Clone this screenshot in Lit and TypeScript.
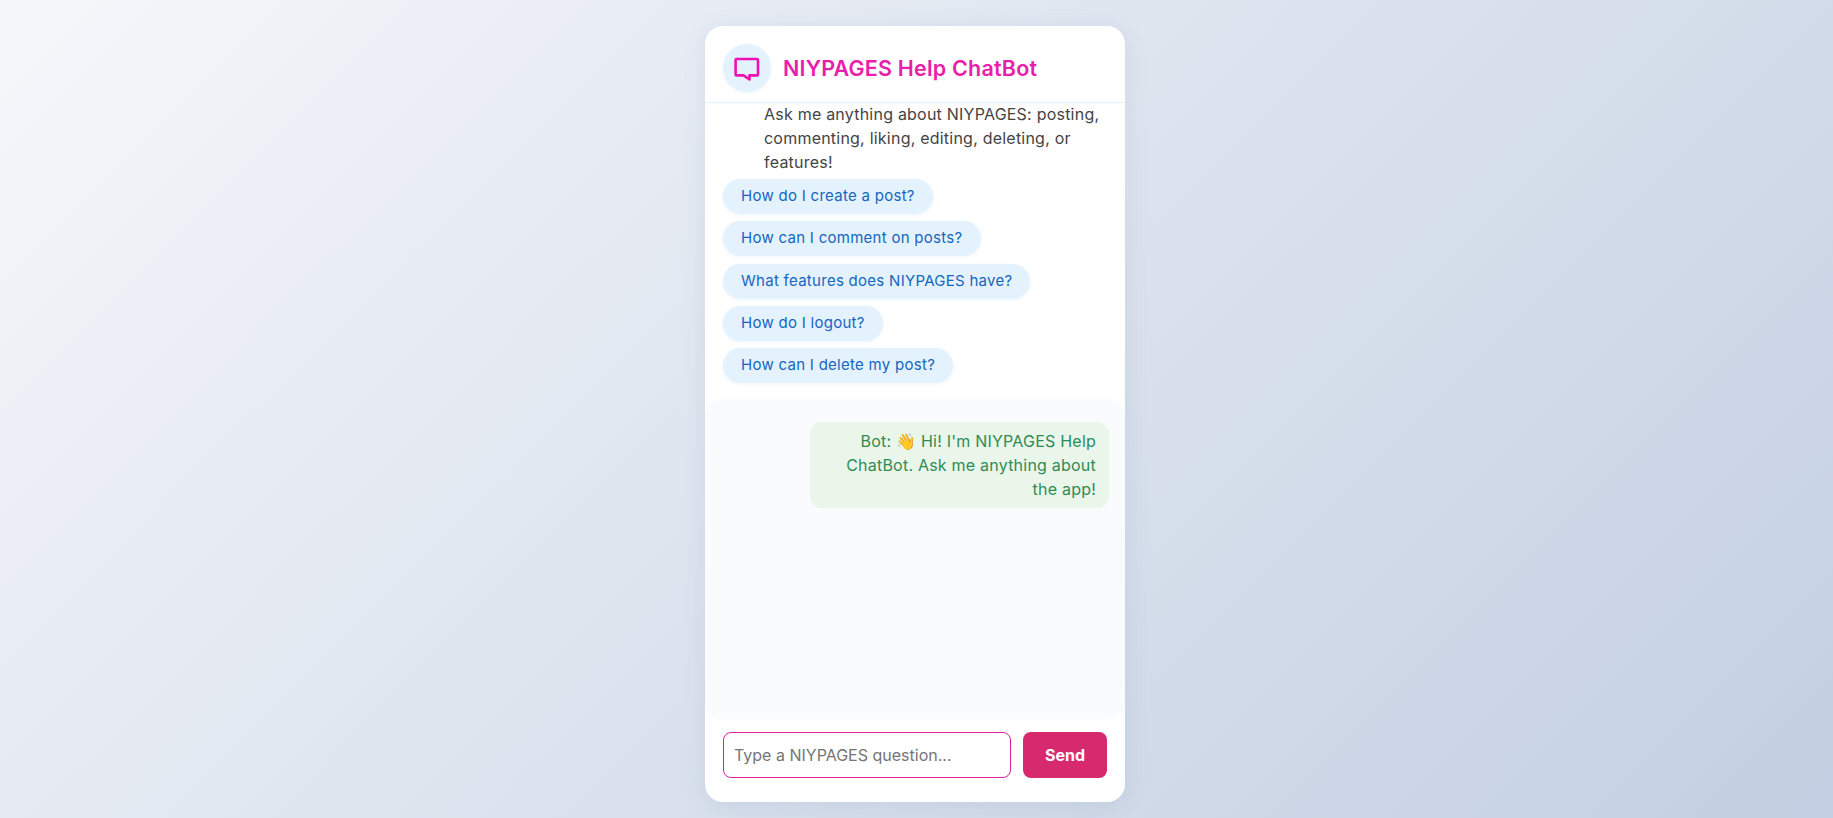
import { LitElement, css, html } from 'lit'
import { customElement, state } from 'lit/decorators.js'

const QUESTIONS = [
  'How do I create a post?',
  'How can I comment on posts?',
  'What features does NIYPAGES have?',
  'How do I logout?',
  'How can I delete my post?',
]

@customElement('app-root')
export class AppRoot extends LitElement {
  @state() private draft = ''

  static styles = css`
    :host {
      display: flex;
      justify-content: center;
      box-sizing: border-box;
      height: 818px;
      padding: 26px 3px 16px 0;
      background: linear-gradient(135deg, #f5f7fa 0%, #c3cfe2 100%);
      font-family: Inter, 'Open Sans', sans-serif;
      font-size: 16px;
      letter-spacing: 0.22px;
    }

    .card {
      width: 420px;
      display: flex;
      flex-direction: column;
      background: #fff;
      border-radius: 18px;
      box-shadow: 0 4px 24px rgba(60, 90, 150, 0.1);
      overflow: hidden;
    }

    .header {
      display: flex;
      align-items: center;
      gap: 12px;
      height: 77px;
      box-sizing: border-box;
      padding: 18px 18px 10px;
      border-bottom: 1px solid #e3f2fd;
    }
    .avatar {
      width: 48px;
      height: 48px;
      border-radius: 50%;
      background: #e3f2fd;
      display: flex;
      align-items: center;
      justify-content: center;
      box-shadow: 0 1px 4px rgba(25, 118, 210, 0.06);
    }
    .title {
      font-size: 21.5px;
      font-weight: 600;
      letter-spacing: 0.2px;
      color: #e91eaa;
    }

    .intro {
      margin: -1px 0 0;
      padding: 0 18px 0 59px;
      color: #444;
      line-height: 24px;
    }

    .chips {
      display: flex;
      flex-direction: column;
      align-items: flex-start;
      gap: 7.25px;
      padding: 5px 18px 16px;
    }
    .chip {
      height: 35px;
      padding: 0 18px 2px;
      border: none;
      border-radius: 18px;
      background: #e3f2fd;
      color: #1565c0;
      font: inherit;
      font-size: 15px;
      letter-spacing: 0.28px;
      box-shadow: 0 1px 4px rgba(25, 118, 210, 0.07);
    }

    .log {
      flex: 1;
      display: flex;
      flex-direction: column;
      align-items: flex-end;
      padding: 23px 16px;
      background: #f9fbfd;
      border-radius: 18px;
    }
    .bubble {
      box-sizing: border-box;
      width: 299px;
      padding: 7px 13px;
      border-radius: 12px;
      background: #eaf6ea;
      color: #2e8b57;
      text-align: right;
      line-height: 24px;
    }

    .composer {
      display: flex;
      gap: 12px;
      padding: 13px 18px 24px;
    }
    .composer input {
      flex: 1;
      min-width: 0;
      height: 46px;
      box-sizing: border-box;
      padding: 0 10px 1px;
      border: 1px solid #dd1fa0;
      border-radius: 8px;
      outline: none;
      font: inherit;
      color: #333;
    }
    .composer input::placeholder {
      color: #757575;
    }
    .composer button {
      width: 84px;
      height: 46px;
      border: none;
      border-radius: 8px;
      background: #d72a6e;
      color: #fff;
      font: inherit;
      font-weight: 700;
    }
  `

  render() {
    return html`
      <div class="card">
        <div class="header">
          <div class="avatar">
            <svg width="28" height="28" viewBox="0 0 28 28" fill="none">
              <path
                d="M3.600 5h20.400a1 1 0 0 1 1 1v14.400a1 1 0 0 1-1 1h-7.500v4.100l-6-4.100h-6.900a1 1 0 0 1-1-1v-14.400a1 1 0 0 1 1-1z"
                stroke="#f00fb4"
                stroke-width="2.600"
                stroke-linejoin="round"
              />
            </svg>
          </div>
          <div class="title">NIYPAGES Help ChatBot</div>
        </div>
        <p class="intro">Ask me anything about NIYPAGES: posting, commenting, liking, editing, deleting, or features!</p>
        <div class="chips">
          ${QUESTIONS.map((q) => html`<button class="chip">${q}</button>`)}
        </div>
        <div class="log">
          <div class="bubble">Bot: 👋 Hi! I'm NIYPAGES Help ChatBot. Ask me anything about the app!</div>
        </div>
        <div class="composer">
          <input
            placeholder="Type a NIYPAGES question..."
            .value=${this.draft}
            @input=${(e: Event) => (this.draft = (e.target as HTMLInputElement).value)}
          />
          <button>Send</button>
        </div>
      </div>
    `
  }
}
